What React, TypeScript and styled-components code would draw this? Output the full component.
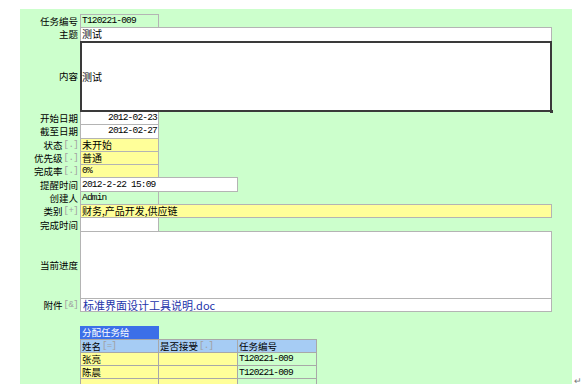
import { Fragment } from "react";
import styled, { createGlobalStyle } from "styled-components";

const GlobalStyle = createGlobalStyle`
  html, body {
    margin: 0;
    padding: 0;
    background: #ffffff;
  }
  body {
    font-family: "Noto Sans CJK SC", "Liberation Sans", sans-serif;
    color: #000;
  }
`;

const CJK = `"Noto Sans CJK SC", "Liberation Sans", sans-serif`;
const MONO = `"Liberation Mono", "Noto Sans CJK SC", monospace`;

const Page = styled.div`
  display: flex;
  align-items: flex-end;
  padding: 9px 0 0 20px;
`;

const Panel = styled.div`
  width: 552px;
  height: 375px;
  box-sizing: border-box;
  padding: 5px 20px 0 0;
  background: #ccffcc;
  overflow: hidden;
  display: flex;
  flex-direction: column;
  & > * {
    flex-shrink: 0;
  }
`;

const ReturnMark = styled.span`
  font-family: ${CJK};
  font-size: 9px;
  line-height: 9px;
  color: #777;
  margin: 0 0 -1px 2px;
`;

const Row = styled.div<{ $h?: number }>`
  display: grid;
  grid-template-columns: 60px 1fr;
  height: ${(p) => p.$h ?? 14.3}px;
  & + & {
    margin-top: -1px;
  }
`;

const Label = styled.div`
  display: flex;
  align-items: center;
  justify-content: flex-end;
  padding-right: 2px;
  font-family: ${CJK};
  font-size: 9.5px;
  line-height: 12px;
  white-space: nowrap;
  overflow: hidden;
`;

const Hint = styled.span`
  font-family: ${MONO};
  font-size: 9px;
  letter-spacing: -0.6px;
  color: #a0a0a0;
  margin-left: 1px;
`;

const Field = styled.div<{ $w: number; $bg?: string; $right?: boolean }>`
  width: ${(p) => p.$w}px;
  height: 100%;
  box-sizing: border-box;
  border: 1px solid #b4b4b4;
  background: ${(p) => p.$bg ?? "#ffffff"};
  display: flex;
  align-items: center;
  justify-content: ${(p) => (p.$right ? "flex-end" : "flex-start")};
  padding: 0 1px;
  font-family: ${CJK};
  font-size: 10px;
  line-height: 12px;
  white-space: nowrap;
  overflow: hidden;
`;

const Mono = styled.span`
  font-family: ${MONO};
  font-size: 9.5px;
  letter-spacing: -0.8px;
  color: #000;
`;

const ContentBox = styled.div`
  position: relative;
  width: 472px;
  height: 100%;
  box-sizing: border-box;
  border: 2px solid #3a3a3a;
  background: #ffffff;
  display: flex;
  align-items: center;
  font-family: ${CJK};
  font-size: 10px;
`;

const Grip = styled.span`
  position: absolute;
  right: -3px;
  bottom: -3px;
  width: 3px;
  height: 3px;
  background: #3a3a3a;
`;

const FileLink = styled.a`
  font-family: ${CJK};
  font-size: 11px;
  color: #2233aa;
  text-decoration: underline;
  margin-left: 1px;
`;

const Assign = styled.div`
  margin: 14px 0 0 60px;
`;

const AssignTitle = styled.div`
  width: 79px;
  height: 12.3px;
  box-sizing: border-box;
  background: #3c6fe8;
  color: #ffffff;
  font-family: ${CJK};
  font-size: 9.5px;
  display: flex;
  align-items: center;
  padding-left: 2px;
`;

const Grid = styled.div`
  display: grid;
  grid-template-columns: 78px 79px 79px;
  grid-auto-rows: 13.3px;
  width: max-content;
  border-left: 1px solid #a8a8a8;
  border-top: 1px solid #a8a8a8;
`;

const Cell = styled.div<{ $bg: string }>`
  box-sizing: border-box;
  border-right: 1px solid #a8a8a8;
  border-bottom: 1px solid #a8a8a8;
  background: ${(p) => p.$bg};
  display: flex;
  align-items: center;
  padding-left: 1px;
  font-family: ${CJK};
  font-size: 9.5px;
  white-space: nowrap;
`;

const YELLOW = "#ffff99";
const GREEN = "#ccffcc";
const HEAD = "#a6ccf4";

const people = ["张亮", "陈晨", ""];

export default function App() {
  return (
    <>
      <GlobalStyle />
      <Page>
        <Panel>
          <Row>
            <Label>任务编号</Label>
            <Field $w={79} $bg={GREEN}>
              <Mono>T120221-009</Mono>
            </Field>
          </Row>
          <Row>
            <Label>主题</Label>
            <Field $w={472}>测试</Field>
          </Row>
          <Row $h={71.4}>
            <Label>内容</Label>
            <ContentBox>
              测试
              <Grip />
            </ContentBox>
          </Row>
          <Row>
            <Label>开始日期</Label>
            <Field $w={79} $right>
              <Mono>2012-02-23</Mono>
            </Field>
          </Row>
          <Row>
            <Label>截至日期</Label>
            <Field $w={79} $right>
              <Mono>2012-02-27</Mono>
            </Field>
          </Row>
          <Row>
            <Label>
              状态<Hint>[.]</Hint>
            </Label>
            <Field $w={79} $bg={YELLOW}>
              未开始
            </Field>
          </Row>
          <Row>
            <Label>
              优先级<Hint>[.]</Hint>
            </Label>
            <Field $w={79} $bg={YELLOW}>
              普通
            </Field>
          </Row>
          <Row>
            <Label>
              完成率<Hint>[.]</Hint>
            </Label>
            <Field $w={79} $bg={YELLOW}>
              <Mono>0%</Mono>
            </Field>
          </Row>
          <Row>
            <Label>提醒时间</Label>
            <Field $w={158}>
              <Mono>2012-2-22 15:09</Mono>
            </Field>
          </Row>
          <Row>
            <Label>创建人</Label>
            <Field $w={79} $bg={GREEN}>
              <Mono>Admin</Mono>
            </Field>
          </Row>
          <Row>
            <Label>
              类别<Hint>[+]</Hint>
            </Label>
            <Field $w={472} $bg={YELLOW}>
              财务,产品开发,供应链
            </Field>
          </Row>
          <Row>
            <Label>完成时间</Label>
            <Field $w={79} />
          </Row>
          <Row $h={68.3}>
            <Label>当前进度</Label>
            <Field $w={472} />
          </Row>
          <Row>
            <Label>
              附件<Hint>[&amp;]</Hint>
            </Label>
            <Field $w={472}>
              <FileLink href="#">标准界面设计工具说明.doc</FileLink>
            </Field>
          </Row>

          <Assign>
            <AssignTitle>分配任务给</AssignTitle>
            <Grid>
              <Cell $bg={HEAD}>
                姓名<Hint>[=]</Hint>
              </Cell>
              <Cell $bg={HEAD}>
                是否接受<Hint>[.]</Hint>
              </Cell>
              <Cell $bg={HEAD}>任务编号</Cell>
              {people.map((name, i) => (
                <Fragment key={i}>
                  <Cell $bg={YELLOW}>{name}</Cell>
                  <Cell $bg={YELLOW} />
                  <Cell $bg={GREEN}>{name && <Mono>T120221-009</Mono>}</Cell>
                </Fragment>
              ))}
            </Grid>
          </Assign>
        </Panel>
        <ReturnMark>↵</ReturnMark>
      </Page>
    </>
  );
}
